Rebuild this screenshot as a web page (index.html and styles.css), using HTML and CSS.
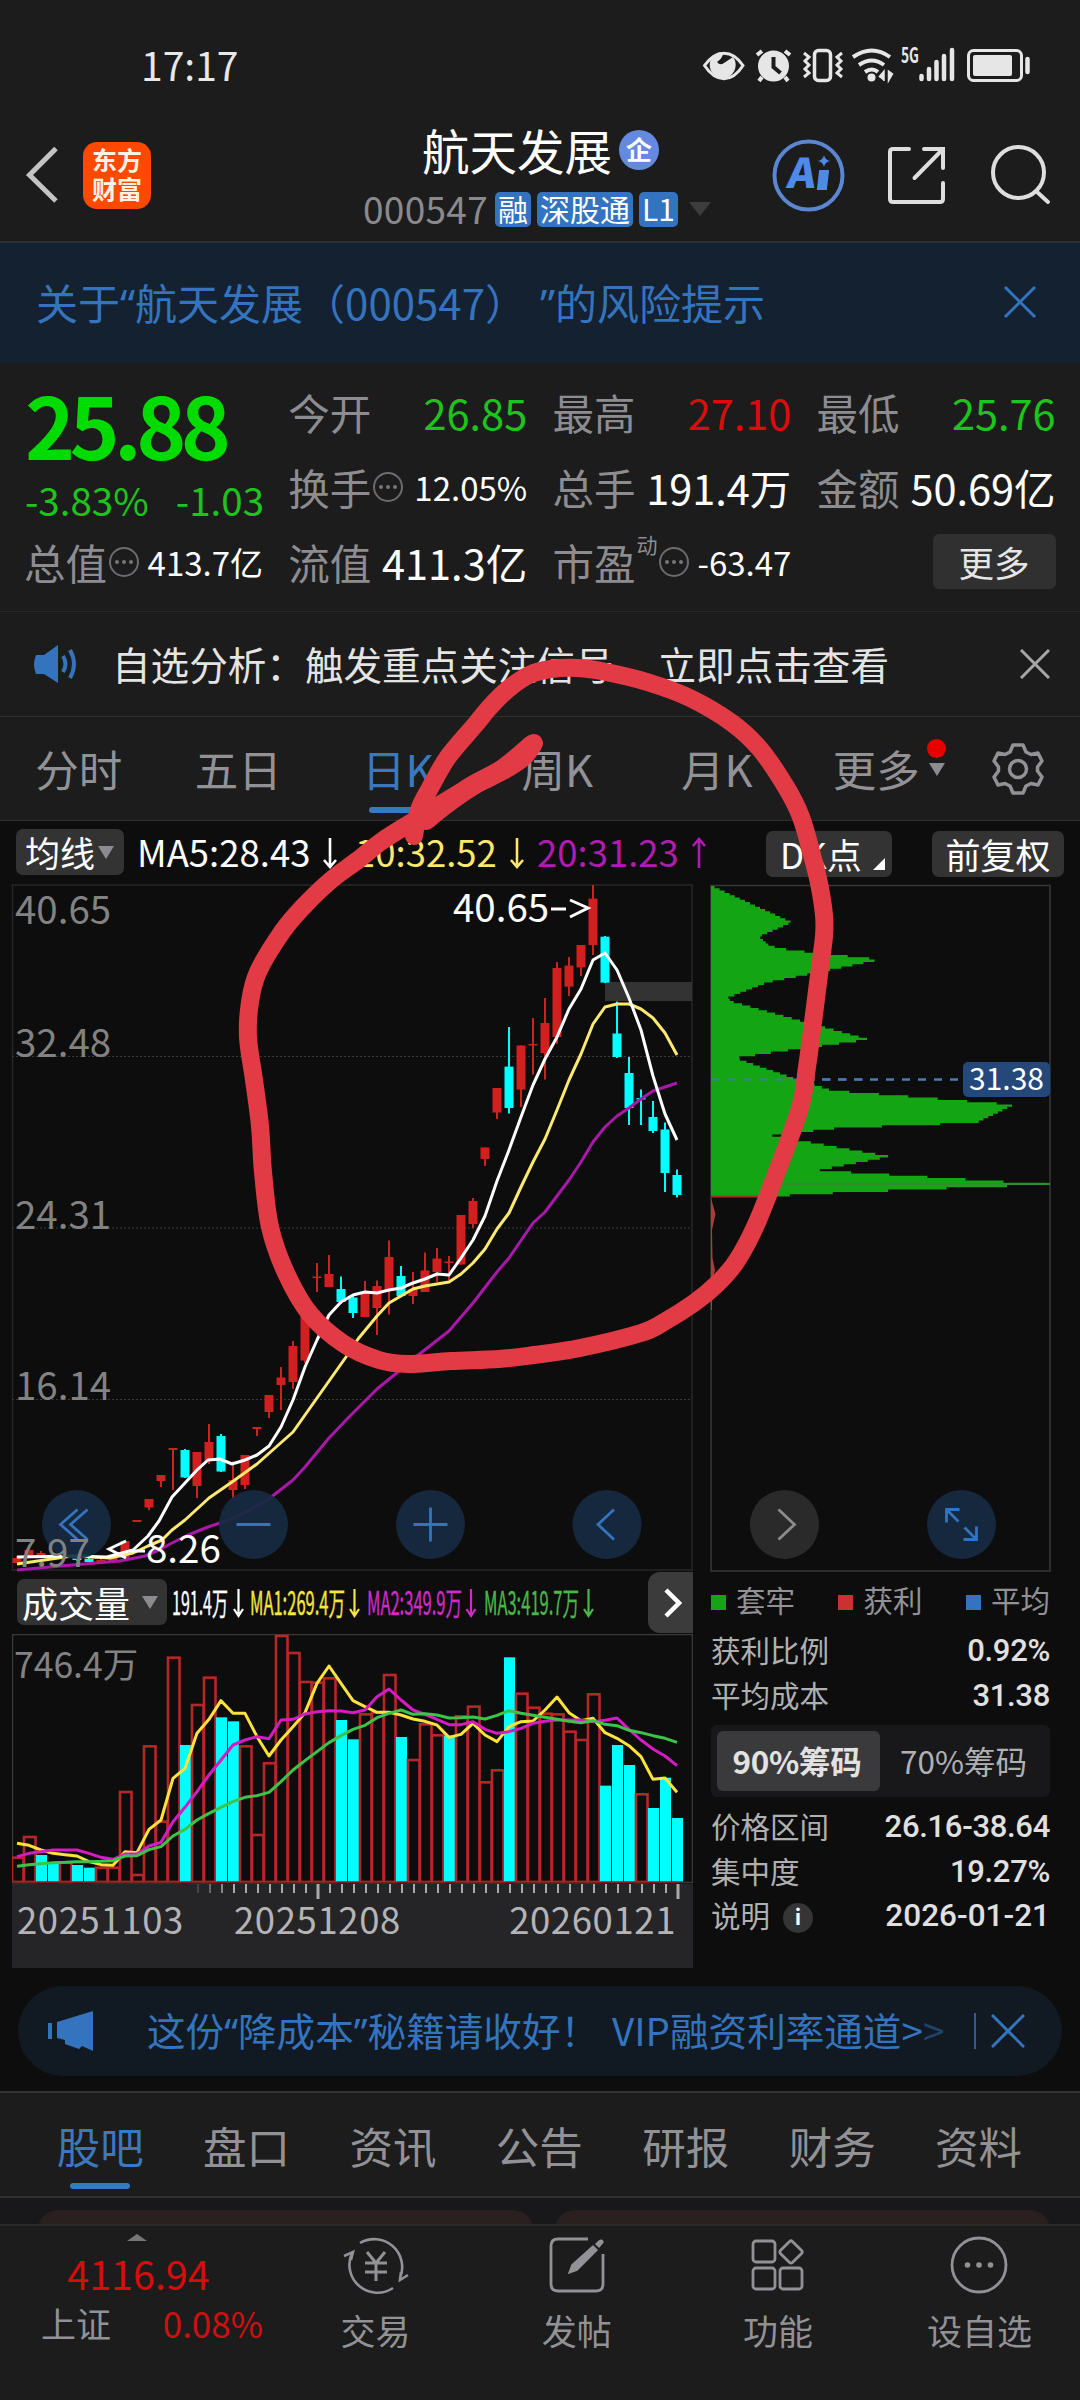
FILE: index.html
```html
<!DOCTYPE html>
<html lang="zh-CN">
<head>
<meta charset="utf-8">
<title>航天发展 000547</title>
<link rel="stylesheet" href="styles.css">
</head>
<body>
<div class="screen">

  <div class="statusbar">
    <span class="clock">17:17</span>
    <svg class="status-icons" width="340" height="50" viewBox="700 40 340 50" fill="none" stroke="#e6e6e6">
      <path d="M704.500 65.500C716 49 732 49 743 65.500C732 83 716 83 704.500 65.500Z" stroke-width="3"/>
      <path d="M724 52a13 13 0 1 0 9 5l-9 6q-4 3-7-1q5-3 7-10z" fill="#e6e6e6" stroke="none"/>
      <circle cx="773.500" cy="66" r="15.500" fill="#e6e6e6" stroke="none"/>
      <path d="M757 55l5-4M790 55l-5-4M762 77l-3 4M785 77l3 4" stroke-width="4"/>
      <path d="M773.500 57v10l7 6" stroke="#1c1c1c" stroke-width="4"/>
      <rect x="814.500" y="50.500" width="16" height="30" rx="4" stroke-width="3.500"/>
      <path d="M804 53l5 4-4 4 4 4-4 4 4 4-5 4M842 53l-5 4 4 4-4 4 4 4-4 4 5 4" stroke-width="3"/>
      <path d="M853 57q19-13 37 0M859 65q13-9 25 0M865 72q7-5 13 0" stroke-width="4"/>
      <circle cx="871.500" cy="77.500" r="4" fill="#e6e6e6" stroke="none"/>
      <path d="M879 77l5-6v10M888.500 81v-10l4 3z" fill="#e6e6e6" stroke-width="1.500"/>
      <text x="901" y="63" textLength="18" lengthAdjust="spacingAndGlyphs" class="net">5G</text>
      <path d="M921.500 76v3M929 69v10M936.500 62v17M944 56v23M952 50v29" stroke-width="4.500" stroke-linecap="round"/>
      <rect x="968.500" y="50.500" width="53" height="30" rx="5" stroke-width="3"/>
      <rect x="973" y="55" width="39" height="21" rx="2" fill="#e6e6e6" stroke="none"/>
      <path d="M1027.500 59v13" stroke-width="4.500" stroke-linecap="round"/>
    </svg>
  </div>

  <header class="header">
    <svg class="back" width="34" height="56" viewBox="0 0 34 56" fill="none" stroke="#c4c4c4" stroke-width="5"><path d="M31 1.500L4.500 28L31 54"/></svg>
    <div class="logo"><span>东方</span><span>财富</span></div>
    <div class="title-block">
      <div class="title"><span>航天发展</span><i class="badge">企</i></div>
      <div class="sub"><span class="code">000547</span><b class="tag">融</b><b class="tag">深股通</b><b class="tag">L1</b><i class="caret"></i></div>
    </div>
    <svg class="actions" width="310" height="80" viewBox="765 135 310 80" fill="none" stroke="#dedede" stroke-width="4">
      <circle cx="808.500" cy="175.500" r="34" stroke="#5a86d2"/>
      <text x="787" y="188.500" textLength="28" lengthAdjust="spacingAndGlyphs" class="ai" transform="translate(25.500 0) skewX(-8)">A</text>
      <path d="M820 171h8l-2 18h-8z" fill="#4f8ae8" stroke="#4f8ae8" stroke-width="2"/>
      <path d="M824 155q1 5 6 6q-5 1-6 6q-1-5-6-6q5-1 6-6z" fill="#4f8ae8" stroke="none"/>
      <path d="M909 149H893q-3 0-3 3V199q0 3 3 3H940q3 0 3-3V183M924 149H943V168M942 150L914.500 178" stroke-linecap="round"/>
      <circle cx="1018.500" cy="172.500" r="25.500"/>
      <path d="M1036 191L1048 202" stroke-linecap="round"/>
    </svg>
  </header>

  <div class="notice">
    <span>关于<q>“</q>航天发展（000547）<q class="end">”</q>的风险提示</span>
    <svg width="34" height="34" viewBox="0 0 34 34" stroke="#3474be" stroke-width="3"><path d="M2 2L32 32M32 2L2 32"/></svg>
  </div>

  <section class="quote">
    <div class="price"><strong>25.88</strong><div class="change"><span>-3.83%</span><span>-1.03</span></div></div>
    <div class="cell"><label>今开</label><span class="down">26.85</span></div>
    <div class="cell"><label>最高</label><span class="up">27.10</span></div>
    <div class="cell"><label>最低</label><span class="down">25.76</span></div>
    <div class="cell"><label>换手</label><i class="dots"></i><span class="small">12.05%</span></div>
    <div class="cell"><label>总手</label><span>191.4万</span></div>
    <div class="cell"><label>金额</label><span>50.69亿</span></div>
    <div class="cell"><label>总值</label><i class="dots"></i><span class="small">413.7亿</span></div>
    <div class="cell"><label>流值</label><span>411.3亿</span></div>
    <div class="cell"><label>市盈</label><sup>动</sup><i class="dots"></i><span class="small">-63.47</span></div>
    <div class="cell"><button class="more">更多</button></div>
  </section>

  <div class="analysis">
    <svg width="46" height="38" viewBox="0 0 46 38" fill="none" stroke="#3474be" stroke-width="4"><path d="M2 10h8L24 0V38L10 29H2q-4-9 0-19z" fill="#3474be" stroke="none"/><path d="M29 11q5 8 0 16M36 5q8 14 0 28"/></svg>
    <span>自选分析：触发重点关注信号</span><span class="go">立即点击查看</span>
    <svg class="close" width="30" height="30" viewBox="0 0 30 30" stroke="#a6a6a6" stroke-width="3"><path d="M1 1L29 29M29 1L1 29"/></svg>
  </div>

  <nav class="tabs">
    <a>分时</a><a>五日</a><a class="on">日K</a><a>周K</a><a>月K</a><a class="has-dot">更多<i class="caret"></i></a>
    <svg width="54" height="54" viewBox="-27 -27 54 54" fill="none" stroke="#929296" stroke-width="3.500" stroke-linejoin="round"><path d="M-5-24H5L8-17L13-14.500L20-16L24-8L19.500-2V2L24 8L20 16L13 14.500L8 17L5 24H-5L-8 17L-13 14.500L-20 16L-24 8L-19.500 2V-2L-24-8L-20-16L-13-14.500L-8-17Z"/><circle r="8.500"/></svg>
  </nav>

  <main class="charts">
    <div class="ma-row">
      <button class="pill avg">均线<i class="caret"></i></button>
      <span class="ma white">MA5:28.43<svg width="16" height="34" viewBox="0 0 16 34"><path d="M8 2V31M2 24L8 31L14 24"/></svg></span>
      <span class="ma yellow">10:32.52<svg width="16" height="34" viewBox="0 0 16 34"><path d="M8 2V31M2 24L8 31L14 24"/></svg></span>
      <span class="ma purple">20:31.23<svg width="16" height="34" viewBox="0 0 16 34"><path d="M8 32V3M2 10L8 3L14 10"/></svg></span>
      <button class="pill dk">DK点<i class="corner"></i></button>
      <button class="pill fq">前复权</button>
    </div>

    <svg class="kchart" width="1080" height="690" viewBox="0 884 1080 690">
      <g class="frame">
        <path d="M12.500 885H692V1570H12.500Z"/>
        <path class="strong" d="M711 885.500H1050V1571H711Z"/>
        <path class="dotted" d="M12 1056.500H692M12 1228H692M12 1399.500H692"/>
      </g>
      <rect x="605" y="982" width="87" height="19" fill="#333"/>
      <g class="scale">
        <text x="15" y="923.500">40.65</text><text x="15" y="1057">32.48</text><text x="15" y="1229">24.31</text><text x="15" y="1400">16.14</text>
      </g>
      <g id="candles"></g>
      <g id="averages"></g>
      <g id="chips"></g>
      <path d="M711 1079.500H869" class="cost faint"/><path d="M822 1079.500H960" class="cost"/>
      <rect x="963" y="1062" width="87" height="35" rx="5" fill="#24487a"/>
      <text x="969" y="1090" class="cost-label">31.38</text>
      <g class="controls">
        <g transform="translate(76.500 1524.500)"><circle r="34.500"/><path d="M1-15L-16 0L1 15M11-15L-6 0L11 15"/></g>
        <g transform="translate(253.500 1524.500)"><circle r="34.500"/><path d="M-17 0H17"/></g>
        <g transform="translate(430.500 1524.500)"><circle r="34.500"/><path d="M-17 0H17M0-17V17"/></g>
        <g transform="translate(607 1524.500)"><circle r="34.500"/><path d="M7-15L-9 0L7 15"/></g>
        <g transform="translate(784.500 1524.500)" class="off"><circle r="34.500"/><path d="M-6-15L10 0L-6 15"/></g>
        <g transform="translate(961.500 1524.500)"><circle r="34.500"/><path d="M-15-2V-15H-2M-15-15L-3-3M15 2V15H2M15 15L3 3"/></g>
      </g>
      <g class="scale"><text x="15" y="1567">7.97</text></g>
      <g class="extreme">
        <text x="453" y="922">40.65</text><path d="M551 909H566M570 900L588 908L570 917"/>
        <text x="146" y="1563">8.26</text><path d="M145 1551H131M126 1541L109 1549L126 1558"/>
      </g>
    </svg>

    <div class="lower">
      <section class="volume">
        <div class="vol-head">
          <button class="pill vol">成交量<i class="caret"></i></button>
          <svg class="vol-ma" width="440" height="46" viewBox="170 1579 440 46">
            <g fill="#fff" stroke="#fff"><text x="172" y="1615" textLength="56" lengthAdjust="spacingAndGlyphs">191.4万</text><path d="M238.500 1589V1616M234 1609L238.500 1616L243 1609"/></g>
            <g fill="#f5e642" stroke="#f5e642"><text x="250" y="1615" textLength="95" lengthAdjust="spacingAndGlyphs">MA1:269.4万</text><path d="M354.500 1589V1616M350 1609L354.500 1616L359 1609"/></g>
            <g fill="#d02bc8" stroke="#d02bc8"><text x="367" y="1615" textLength="95" lengthAdjust="spacingAndGlyphs">MA2:349.9万</text><path d="M471 1589V1616M466.500 1609L471 1616L475.500 1609"/></g>
            <g fill="#4ab848" stroke="#4ab848"><text x="484" y="1615" textLength="95" lengthAdjust="spacingAndGlyphs">MA3:419.7万</text><path d="M588.500 1589V1616M584 1609L588.500 1616L593 1609"/></g>
          </svg>
          <button class="next"><svg width="18" height="30" viewBox="0 0 18 30" fill="none" stroke="#fff" stroke-width="4.500"><path d="M2 2L15 15L2 28"/></svg></button>
        </div>
        <svg class="vchart" width="681" height="250" viewBox="12 1634 681 250">
          <path d="M12.500 1634.500H692.500V1882.500H12.500Z" fill="none" stroke="#3a3a3a" stroke-width="1.500"/>
          <text x="14" y="1678" class="vmax">746.4万</text>
          <g id="volumes"></g>
        </svg>
        <div class="axis">
          <svg width="681" height="18" viewBox="12 1884 681 18" stroke="#aaa" id="ticks"></svg>
          <div class="dates"><span>20251103</span><span>20251208</span><span>20260121</span></div>
        </div>
      </section>

      <aside class="side">
        <div class="legend"><span class="g">套牢</span><span class="r">获利</span><span class="b">平均</span></div>
        <div class="stat"><span>获利比例</span><b>0.92%</b></div>
        <div class="stat"><span>平均成本</span><b>31.38</b></div>
        <div class="toggle"><b>90%筹码</b><span>70%筹码</span></div>
        <div class="stat"><span>价格区间</span><b>26.16-38.64</b></div>
        <div class="stat"><span>集中度</span><b>19.27%</b></div>
        <div class="stat"><span>说明<i class="info">i</i></span><b class="date">2026-01-21</b></div>
      </aside>
    </div>

    <div class="promo">
      <svg width="46" height="40" viewBox="0 0 46 40" fill="#3474be"><path d="M0 12h4v16H0zM9 11L45 0V40L34 35L31 38L17 33V29L9 27z"/></svg>
      <span class="promo-text">这份<q>“</q>降成本<q>”</q>秘籍请收好！<span class="offer">VIP融资利率通道&gt;</span><em>&gt;</em></span>
      <i class="bar"></i>
      <svg width="34" height="34" viewBox="0 0 34 34" stroke="#3474be" stroke-width="3"><path d="M1 1L33 33M33 1L1 33"/></svg>
    </div>
  </main>

  <nav class="sections"><a class="on">股吧</a><a>盘口</a><a>资讯</a><a>公告</a><a>研报</a><a>财务</a><a>资料</a></nav>
  <div class="cards"><div></div><div></div></div>

  <footer class="bottom">
    <div class="index"><i class="tri"></i><span class="point">4116.94</span><div><span>上证</span><span class="pct">0.08%</span></div></div>
    <a><svg width="66" height="60" viewBox="-33 -30 66 60"><path d="M-16-23A28 28 0 0 1 24 12M17 22A28 28 0 0 1-24-13M-32-10L-23-14L-25-6M32 9L24 14L25 6" stroke-width="2.600"/><path d="M-9-14L0-3L9-14M-11-3H11M-11 6H11M0-3V15" stroke-width="3"/></svg>交易</a>
    <a><svg width="60" height="60" viewBox="-30 -30 60 60"><path d="M11-27H-19Q-26-27-26-20V18Q-26 25-19 25H19Q26 25 26 18V-12"/><path d="M-8 7L-5-1L16-20L20-16L0 4ZM19-22L22-25Q25-27 26-24L22-19Z" fill="#929296" stroke-width="1.500"/></svg>发帖</a>
    <a><svg width="60" height="60" viewBox="-30 -30 60 60"><rect x="-25" y="-25" width="22" height="21" rx="3"/><rect x="-25" y="2" width="22" height="21" rx="3"/><rect x="2" y="2" width="22" height="21" rx="3"/><rect x="4.500" y="-22.500" width="17" height="17" rx="2" transform="rotate(45 13 -14)"/></svg>功能</a>
    <a><svg width="60" height="60" viewBox="-30 -30 60 60"><circle r="27" cy="-1"/><g fill="#929296" stroke="none"><circle cx="-11.500" cy="-1" r="2.800"/><circle cy="-1" r="2.800"/><circle cx="11.500" cy="-1" r="2.800"/></g></svg>设自选</a>
  </footer>

  <svg class="markup" width="1080" height="2400" viewBox="0 0 1080 2400" fill="none" stroke="#e23b45" stroke-width="18" stroke-linecap="round" stroke-linejoin="round" id="markup"></svg>
</div>
<script src="chart.js"></script>
</body>
</html>
```
FILE: styles.css
```css
* { box-sizing: border-box; }
body { margin: 0; background: #1c1c1c; font-family: "Noto Sans CJK SC", "Noto Sans", sans-serif; color: #fff; text-spacing-trim: space-all; }
button { border: 0; padding: 0; font: inherit; color: inherit; }
i, em { font-style: normal; }
q { font-family: "Noto Sans", sans-serif; quotes: none; }
q::before, q::after { content: none; }
.screen { position: relative; width: 1080px; height: 2400px; overflow: hidden; display: flex; flex-direction: column; white-space: nowrap; }
.screen > * { flex: none; }
svg { display: block; flex: none; }
.caret { display: inline-block; width: 0; height: 0; border: 8px solid transparent; border-top: 13px solid #8c8c90; border-bottom: 0; }

.statusbar { height: 130px; padding: 40px 40px 0 141px; display: flex; justify-content: space-between; }
.clock { font-size: 39px; line-height: 48px; color: #e8e8e8; }
.net { font-size: 21px; font-weight: 700; fill: #e6e6e6; stroke: none; }

.header { height: 113px; border-bottom: 2px solid #2b2f33; display: flex; padding-left: 25px; }
.back { margin-top: 17px; }
.logo { margin: 12px 0 0 24px; width: 68px; height: 67px; border-radius: 14px; background: #ff4800; color: #fff3e8; font: 700 25px/29px "Noto Sans CJK SC", sans-serif; display: flex; flex-direction: column; align-items: center; padding-top: 3px; }
.title-block { margin-left: 212px; width: 390px; }
.title { display: flex; align-items: center; height: 44px; padding-left: 59px; font-size: 47.500px; line-height: 44px; margin-top: -2px; }
.badge { margin-left: 7px; width: 40px; height: 40px; border-radius: 50%; background: #6689e0; font-size: 26px; line-height: 38px; text-align: center; font-weight: 700; }
.sub { display: flex; align-items: center; gap: 6px; height: 36px; margin-top: 19px; font-size: 37px; color: #8a8a8e; }
.code { line-height: 34px; letter-spacing: .3px; margin: -2px 1px 0 0; }
.tag { height: 35px; border-radius: 5px; background: #3373c0; color: #fff; padding: 0 3px; font-size: 30px; line-height: 32px; font-weight: 400; }
.sub .caret { margin-left: 5px; border-width: 14px 11px 0; border-top-color: #3d3d3d; }
.actions { margin-left: 12px; margin-top: 5px; }
.ai { font: 900 41px "Noto Sans CJK SC", sans-serif; fill: #4f8ae8; stroke: none; }

.notice { height: 120px; background: #142130; color: #3474be; font-size: 42px; padding: 0 43px 4px 36px; display: flex; align-items: center; justify-content: space-between; }
.notice svg { margin-top: 2px; }
.notice .end { margin-left: 13px; }

.quote { height: 249px; border-bottom: 1px solid #292929; padding: 14px 25px 0; display: grid; grid-template-columns: repeat(4, 238px); grid-template-rows: repeat(3, 75px); column-gap: 26.200px; }
.price { grid-row: span 2; color: #00dc00; }
.price strong { display: block; font-size: 85px; line-height: 92px; letter-spacing: -5.600px; font-weight: 700; height: 97px; }
.change { display: flex; justify-content: space-between; font-size: 38.500px; line-height: 50px; color: #1cc41c; margin-right: -1px; }
.cell { display: flex; align-items: center; justify-content: space-between; font-size: 41.500px; line-height: 70px; padding-bottom: 6px; }
.cell label { color: #8d8d91; margin-left: -1px; }
.cell .down { color: #1cc41c; }
.cell .up { color: #dc0c0c; }
.cell .small { font-size: 33px; }
.cell sup { font-size: 21px; line-height: 24px; color: #8d8d91; margin: -36px 0 0 1px; }
.dots { width: 30px; height: 30px; border: 2px solid #6c6c70; border-radius: 50%; margin-left: 2px; display: grid; place-items: center; }
.dots::before { content: ""; width: 4px; height: 4px; border-radius: 50%; background: #77777b; box-shadow: -7px 0 #77777b, 7px 0 #77777b; }
.dots + .small { margin-left: auto; }
.more { margin-left: auto; width: 123px; height: 55px; border-radius: 6px; background: #303030; font-size: 35.500px; line-height: 48px; color: #e6e6e6; }

.analysis { height: 105px; border-bottom: 1px solid #303030; padding: 0 30px 0 34px; display: flex; align-items: center; font-size: 38.600px; color: #e4e4e4; }
.analysis span { padding-bottom: 3px; margin-left: 32px; }
.analysis .go { margin-left: 44px; }
.close { margin-left: auto; }

.tabs { height: 104px; border-bottom: 1px solid #303030; display: flex; align-items: center; font-size: 43.500px; color: #929296; }
.tabs a { position: relative; width: 159.500px; height: 103px; line-height: 104px; text-align: center; padding-right: 2px; }
.tabs .on, .sections .on { color: #3a78c0; }
.tabs .on::after, .sections .on::after { content: ""; position: absolute; left: 50%; margin-left: -30px; bottom: 7px; width: 60px; height: 6px; border-radius: 3px; background: #3a78c0; }
.tabs .caret { position: absolute; left: 131px; top: 46px; }
.has-dot::after { content: ""; position: absolute; left: 129px; top: 22px; width: 19px; height: 19px; border-radius: 50%; background: #e60000; }
.tabs svg { margin-left: 34px; }

.charts { height: 1272px; background: #0d0d0d; border-bottom: 2px solid #333; }
.ma-row { height: 63px; padding: 8px 16px 0; display: flex; align-items: flex-start; }
.pill { height: 46px; border-radius: 7px; background: #333; font-size: 35px; line-height: 42px; display: flex; align-items: center; }
.pill .caret { margin-left: 3px; }
.avg { width: 108px; padding-left: 9px; }
.ma { display: flex; align-items: center; font-size: 36.500px; line-height: 46px; height: 46px; flex: none; }
.ma svg { fill: none; stroke: currentColor; stroke-width: 2.600; margin: 2px 0 0 12px; }
.white { width: 217px; padding-left: 13px; }
.yellow { color: #fce86a; width: 180px; padding-left: 14px; }
.purple { color: #b01cb0; padding-left: 16px; width: 245px; }
.dk { width: 126px; margin-top: 2px; padding-left: 14px; position: relative; }
.corner { position: absolute; right: 7px; bottom: 7px; border: 6px solid #fff; border-top-color: transparent; border-left-color: transparent; }
.fq { width: 132px; margin: 2px 0 0 auto; justify-content: center; }

.kchart { overflow: visible; }
.frame path { fill: none; stroke: #272727; stroke-width: 1.500; }
.frame .strong { stroke: #383838; }
.frame .dotted { stroke: #3a3a3a; stroke-width: 1; stroke-dasharray: 2 2; }
.scale { font-size: 38.500px; fill: #828282; }
.extreme { font-size: 38.500px; fill: #fff; }
.extreme path { fill: none; stroke: #fff; stroke-width: 3; }
#candles .red { stroke: #d02020; }
#candles .cyan { stroke: #00ffff; }
#averages polyline, #volumes polyline { fill: none; stroke-width: 3; stroke-linejoin: round; }
.cost { stroke: #4a7ab8; stroke-width: 2.500; stroke-dasharray: 8 8; }
.faint { opacity: .6; }
.cost-label { font-size: 30px; fill: #fff; }
.controls circle { fill: #172b42; fill-opacity: .93; }
.controls path { fill: none; stroke: #3474be; stroke-width: 2.800; }
.controls .off circle { fill: #2d2d2d; }
.controls .off path { stroke: #8c8c8c; }

.lower { display: flex; height: 412px; }
.volume { width: 681px; margin-left: 12px; }
.vol-head { height: 60px; display: flex; align-items: flex-start; }
.vol { width: 150px; margin: 5px 0 0 5px; padding-left: 5px; font-size: 36px; }
.vol .caret { margin-left: 12px; }
.vol-ma { margin: 5px 0 0 3px; font-size: 32px; }
.vol-ma text { stroke-width: .4; }
.vol-ma path { fill: none; stroke-width: 2.200; }
.next { width: 45px; height: 61px; margin: -2px 0 0 auto; border-radius: 12px 0 0 12px; background: #3b3b3b; padding-left: 16px; }
.vmax { font-size: 35.500px; fill: #828282; }
.axis { height: 84px; background: #252527; }
.dates { display: flex; font-size: 36.500px; line-height: 40px; color: #b4b4b6; padding: 0 17px 0 5px; margin-top: -3px; letter-spacing: .6px; }
.dates span { width: 217px; }
.dates span:last-child { margin-left: auto; width: auto; }

.side { width: 339px; margin-left: 18px; padding-top: 6px; font-size: 29.500px; color: #b0b0b2; }
.legend { display: flex; justify-content: space-between; height: 48px; line-height: 39px; color: #929296; }
.legend span { display: flex; align-items: flex-start; }
.legend span::before { content: ""; width: 15px; height: 15px; margin: 15px 10px 0 0; background: #13a513; }
.legend .r::before { background: #cc3131; }
.legend .b::before { background: #3373c0; }
.stat { display: flex; justify-content: space-between; height: 44.500px; line-height: 42px; }
.stat b { font: 500 31px/46px Roboto, sans-serif; color: #e0e0e0; letter-spacing: -.3px; }
.stat .date { font-size: 31.500px; letter-spacing: 0; }
.toggle { height: 72px; margin: 8px 0 7px; padding: 6px; border-radius: 6px; background: #18181a; display: flex; font-size: 31.500px; line-height: 58px; text-align: center; }
.toggle b { width: 163px; height: 60px; border-radius: 6px; background: #3a3a3c; color: #e2e2e2; letter-spacing: -.3px; padding-right: 3px; }
.toggle span { flex: 1; padding-left: 3px; }
.info { display: inline-block; width: 30px; height: 30px; border-radius: 50%; background: #353535; color: #fff; font-weight: 700; font-size: 21px; line-height: 27px; text-align: center; margin-left: 13px; vertical-align: 2px; }

.promo { margin: 0 18px; height: 90px; border-radius: 48px; background: #111a22; color: #3474be; display: flex; align-items: center; padding: 0 37px 0 30px; font-size: 38.600px; }
.promo-text { margin-left: 53px; width: 815px; padding-bottom: 5px; }
.offer { margin-left: 13px; }
.promo em { opacity: .45; }
.bar { width: 2px; height: 36px; background: #2c5d96; margin: 0 15px 0 auto; }

.sections { height: 105px; border-bottom: 2px solid #303030; display: flex; padding: 0 27px; font-size: 43.500px; color: #929296; }
.sections a { position: relative; width: 146.400px; height: 103px; text-align: center; line-height: 105px; }
.cards { height: 26px; background: #18181a; padding: 12px 30px 0 38px; display: flex; gap: 22px; overflow: hidden; }
.cards div { width: 495px; height: 40px; border-radius: 22px; background: #2a201f; }

.bottom { height: 176px; border-top: 2px solid #292929; display: flex; background: #1c1c1c; font-size: 35px; color: #929296; }
.index { width: 275px; display: flex; flex-direction: column; align-items: center; }
.tri { border: 10px solid transparent; border-bottom: 7px solid #777; border-top: 0; margin-top: 8px; }
.point { font-size: 39.500px; line-height: 50px; margin: 7px 0 0 2px; color: #d80c0c; }
.index div { display: flex; width: 222px; margin-left: 29px; justify-content: space-between; line-height: 50px; }
.pct { color: #d01010; font-size: 35px; }
.bottom a { width: 201.300px; display: flex; flex-direction: column; align-items: center; line-height: 50px; padding-top: 10px; }
.bottom a svg { fill: none; stroke: #929296; stroke-width: 2.800; margin-bottom: 9px; }
.markup { position: absolute; left: 0; top: 0; }
```
FILE: chart.js
```js
const NS = 'http://www.w3.org/2000/svg';
const add = (id, tag, attrs) => {
  const el = document.createElementNS(NS, tag);
  for (const k in attrs) el.setAttribute(k, attrs[k]);
  document.getElementById(id).appendChild(el);
};
const X = i => 17 + 12 * i;

// Each candle: [up, high, body top, body bottom, low]
const candles = [
  [1,1556,1558,1563,1563],[1,1545,1550,1556,1556],[1,1551,1553,1555,1557],[0,1554,1555,1557,1557],[1,1555,1556,1558,1558],
  [0,1557,1558,1560,1561],[0,1558,1559,1562,1562],[1,1559,1560,1562,1562],[1,1557,1558,1561,1561],[1,1541,1541,1558,1558],
  [1,1520,1520,1522,1522],[1,1499,1499,1507.5,1510],[1,1475,1475,1481,1487],[1,1448,1448,1450,1490],[0,1449,1450,1477.5,1478],
  [1,1452,1452,1486,1498],[1,1424,1442,1461,1464],[0,1434,1436,1471.5,1472],[1,1461.5,1480,1490,1498],[1,1455,1455,1485,1489],
  [1,1427,1427,1429,1436],[1,1395,1395,1412,1418],[1,1367,1377.5,1385,1410],[1,1341,1346,1382,1389],[1,1300,1308,1360.5,1363],
  [1,1263,1276.5,1278,1292],[1,1255,1274,1287,1287],[0,1276.5,1289,1302,1304],[0,1295,1297.5,1313,1318],[1,1281,1293,1317,1317],
  [1,1280.5,1286,1308,1335],[1,1240.6,1257,1289,1314.5],[0,1266,1276,1296,1296],[1,1272,1289,1296,1304],[1,1252.5,1270.5,1292,1292],
  [1,1248,1258.5,1272,1282],[1,1256,1261.5,1263,1280],[1,1215,1215,1264.5,1264.5],[1,1198,1201,1224,1228],[1,1147.5,1147.5,1159,1166],
  [1,1088,1088,1112.5,1119],[0,1027,1066.6,1108,1113.5],[1,1045.5,1045.5,1089.6,1107],[1,1018,1044,1045.5,1074.5],[1,998,1023,1053,1079.5],
  [1,962,968,1037,1043.7],[1,957,965.6,986.7,996],[1,945,945,967.4,976],[1,885,898.6,945,955],[0,936,936.7,982.6,983],
  [0,1001.4,1033.5,1057,1058],[0,1057,1073,1108,1125],[0,1089.6,1098,1099.5,1125],[0,1101,1117,1131,1133],[0,1122.6,1129.5,1173,1192],[0,1169.5,1175,1195,1197.5]
];
candles.forEach(([up, hi, t, b, lo], i) => {
  const c = up ? 'red' : 'cyan';
  add('candles', 'path', {class: c, d: `M${X(i)} ${hi}V${lo}`, 'stroke-width': 2});
  add('candles', 'path', {class: c, d: `M${X(i)} ${t}V${b}`, 'stroke-width': 9});
});

const line = (id, color, pts) => add(id, 'polyline', {stroke: color, points: pts});
line('averages', '#aa18aa', '17,1570 72,1565 120,1561 145,1556 159,1550 172,1543 188,1535 208,1527 232,1519 253,1508 270,1498 293,1480 305,1467 329,1438 348,1418 377,1389 393,1376 417,1356 449,1331 473,1303 497,1272 509,1258 533,1223 545,1212 569,1180 581,1162 593,1142 605,1127 617,1116 629,1108 641,1099 653,1091 665,1087 677,1083');
line('averages', '#fcea70', '17,1564 72,1556 110,1558 133,1553 148,1546 162,1540 172,1530 185,1520 209,1498 232,1482 257,1464 293,1432 317,1398 346,1357 358,1339 377,1316 389,1303 413,1289 425,1286 449,1282 461,1274 473,1263 485,1249 497,1229 509,1213 521,1187 533,1162 545,1139 557,1110 569,1080 581,1054 593,1024 605,1007 617,1004 629,1004 641,1009 653,1018 665,1033 677,1055');
line('averages', '#ffffff', '17,1557 72,1556 107,1557 133,1550 148,1536 159,1521 172,1497 185,1483 197,1470 208,1460 220,1459 232,1464 245,1460 257,1455 269,1446 281,1427 293,1400 305,1367 317,1340 329,1315 341,1302 353,1295 365,1292 377,1293 389,1290 401,1288 413,1283 425,1279 437,1274 449,1275 461,1258 473,1240 485,1216 497,1181 509,1150 521,1117 533,1085 545,1059 557,1037 569,1009 581,989 593,960 605,953 617,970 629,998 641,1030 653,1076 665,1114 677,1140');

// Cost distribution outline: [price row, extent]
const outline = [[886,712],[922.4,792],[936.7,759],[946,770],[950,790],[959.6,880],[970,830],[982.6,767],[997.7,728],[1001.4,731],[1020,798],[1039.5,869],[1053,769],[1058,735],[1079,796],[1090.5,832],[1104.7,1014],[1122.6,977],[1128,840],[1135.5,772],[1156.6,890],[1170.4,818],[1172.7,857],[1182,1011],[1184,1050],[1187,990],[1189,930],[1194,810],[1196,780]];
const STEP = 2.3;
let d = 'M711 886';
for (let y = 886; y < 1195.5; y += STEP) {
  const m = y + STEP / 2;
  let k = 0;
  while (k < outline.length - 2 && outline[k + 1][0] < m) k++;
  const [ya, xa] = outline[k], [yb, xb] = outline[k + 1];
  d += `H${(xa + (xb - xa) * (m - ya) / (yb - ya)).toFixed(1)}V${(y + STEP).toFixed(1)}`;
}
add('chips', 'path', {d: d + 'H711Z', fill: '#13a513'});
add('chips', 'path', {d: 'M777 1184H1050', stroke: '#338a33', 'stroke-width': 2});
add('chips', 'path', {d: 'M711 1196.500H768', stroke: '#a03228', 'stroke-width': 2});
add('chips', 'path', {d: 'M711 1198L715.500 1214L712 1230L712.500 1258L715 1270L712 1282V1310H711Z', fill: '#b03a3a'});

// Volume: cyan days and bar tops
const cyanDays = new Set([2,3,5,6,14,17,18,27,28,32,36,41,49,50,51,53,54,55]);
const tops = [890,828,885,908,905,915,923,920,920,693,942,556,782,290,555,432,350,472,484,556,822,607,225,276,363,365,352,480,538,460,455,342,531,597,490,523,527,466,437,664,628,292,398,440,458,460,512,537,400,677,555,615,700,744,653,774];
const VY = v => 1560 + v / 3;
tops.forEach((t, i) => {
  const y = VY(t);
  if (cyanDays.has(i)) add('volumes', 'rect', {x: X(i) - 5, y: y, width: 11, height: 1881.5 - y, fill: '#00ffff'});
  else add('volumes', 'rect', {x: X(i) - 5, y: y + 1, width: 11.5, height: 1881 - y, fill: '#0d0d0d', stroke: '#b42828', 'stroke-width': 2.6});
});
add('volumes', 'path', {d: 'M12 1882.500H678', stroke: '#7a2020', 'stroke-width': 1.5});
const vma = (color, arr) => line('volumes', color, arr.map((v, i) => `${X(i)},${VY(v)}`).join(' '));
vma('#ffe23c', [850,856,870,880,884,888,905,914,916,875,878,808,780,655,625,520,478,422,460,460,530,588,540,500,458,370,318,370,422,440,457,457,465,477,484,495,532,523,490,525,545,500,485,483,450,411,458,482,475,518,535,557,590,658,654,697]);
vma('#d31cc4', [890,880,875,870,870,870,880,892,898,882,882,858,847,785,742,695,645,600,555,540,530,536,480,478,462,455,452,453,458,450,410,387,420,450,463,478,494,494,485,508,520,515,505,490,484,480,480,480,485,481,474,508,540,567,588,617]);
vma('#3cc448', [919,914,911,908,907,905,905,904,902,888,887,869,860,828,808,780,760,742,725,712,707,697,665,630,602,575,548,527,508,496,473,460,450,463,461,465,474,473,471,477,466,452,460,466,472,478,484,488,482,493,497,511,518,527,535,547]);

for (let i = 15; i < 56; i++) {
  const major = i === 25 || i === 55;
  add('ticks', 'path', {d: `M${X(i) + 1} 1884V${major ? 1899 : 1893}`, 'stroke-width': major ? 3 : 2, opacity: i < 18 ? 0.25 * (i - 14) : 1});
}

// Freehand marker stroke, smoothed through its sample points
const smooth = p => {
  let s = `M${p[0]}`;
  for (let i = 0; i < p.length - 1; i++) {
    const a = p[Math.max(i - 1, 0)], b = p[i], c = p[i + 1], e = p[Math.min(i + 2, p.length - 1)];
    s += `C${b[0] + (c[0] - a[0]) / 6} ${b[1] + (c[1] - a[1]) / 6} ${c[0] - (e[0] - b[0]) / 6} ${c[1] - (e[1] - b[1]) / 6} ${c[0]} ${c[1]}`;
  }
  return s;
};
add('markup', 'path', {d: smooth([[534,743],[524,757],[503,771],[472,786],[441,804],[412,822],[382,841],[358,860],[330,881],[303,907],[282,932],[258,972],[250,1002],[248,1037],[254,1080],[260,1126],[263,1172],[270,1227],[286,1273],[310,1314],[344,1344],[379,1360],[408,1364],[451,1361],[499,1359],[534,1355],[580,1348],[641,1333],[664,1322],[694,1303],[717,1284],[736,1262],[755,1227],[775,1177],[800,1108],[807,1067],[812,1030],[819,975],[824,936],[824,915],[819,883],[812,855],[801,817],[786,787],[760,749],[732,723],[690,698],[647,682],[606,672],[578,668],[551,669],[529,675],[507,690],[489,708],[475,725],[448,757],[430,788],[419,810],[414,836]])});
add('markup', 'path', {d: smooth([[532,745],[503,769],[472,786],[446,804],[426,820]]), 'stroke-width': 20});
```
